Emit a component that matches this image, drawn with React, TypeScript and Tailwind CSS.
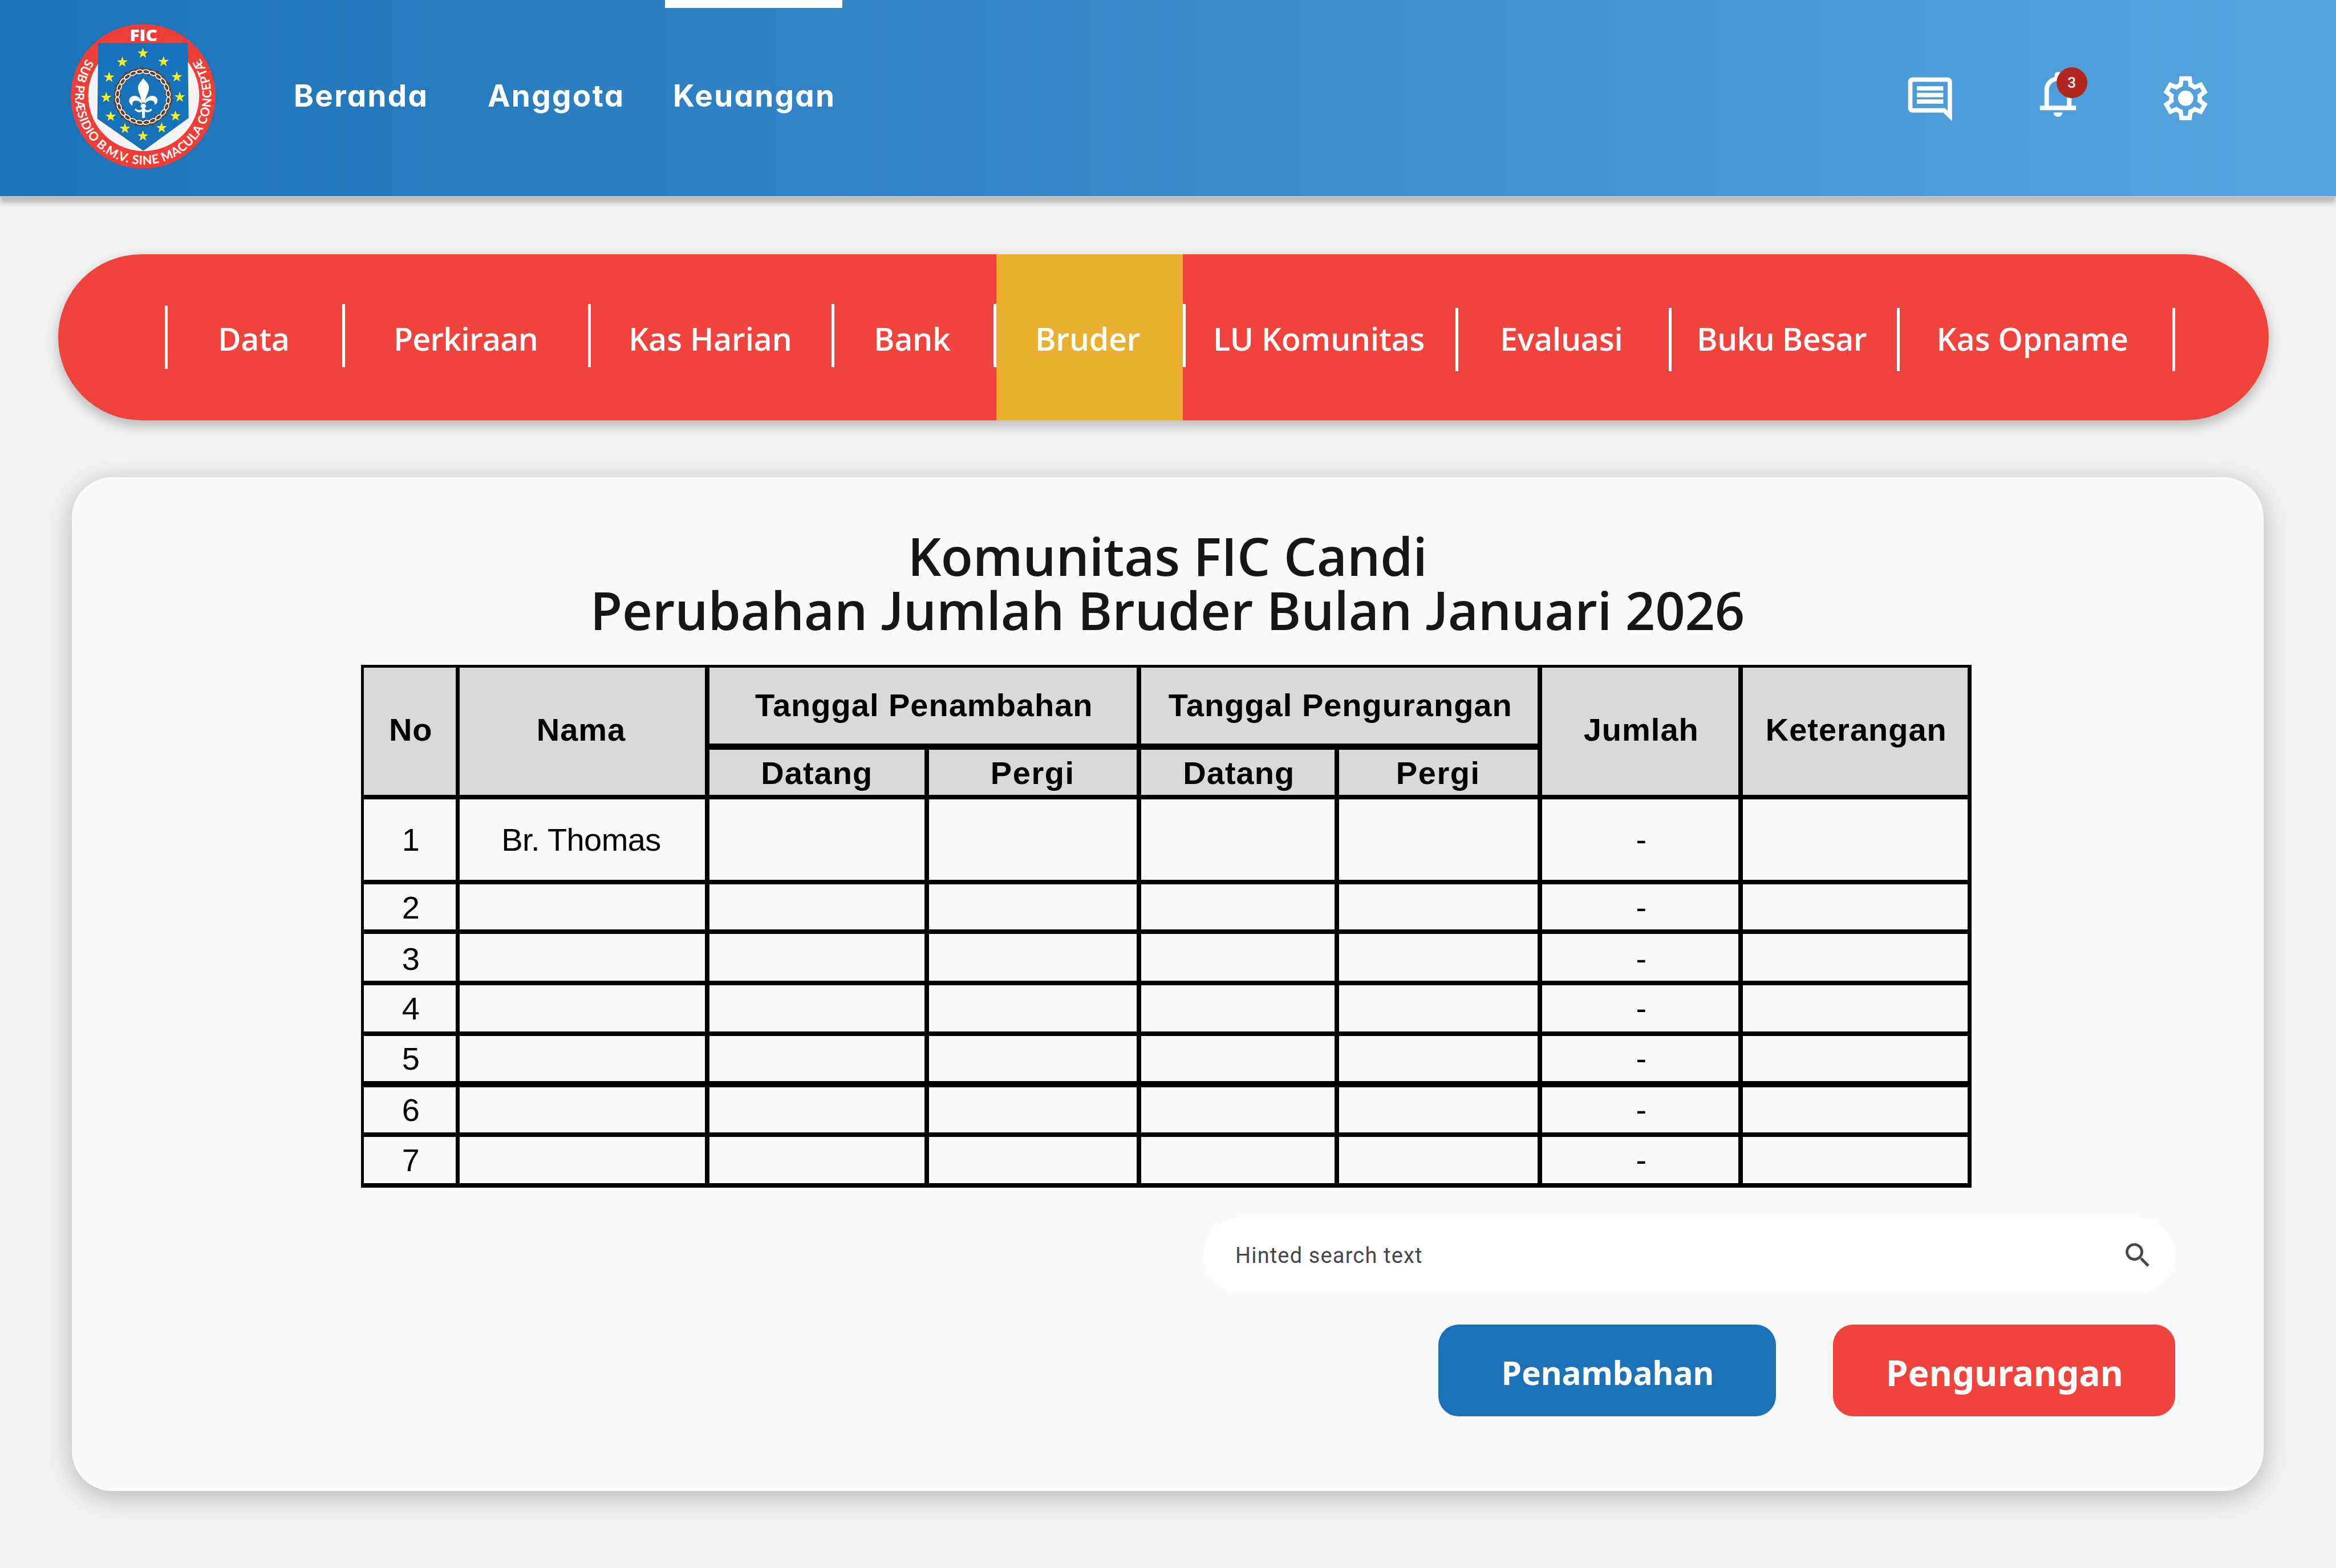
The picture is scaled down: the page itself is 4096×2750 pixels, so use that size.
import type { ReactNode } from "react";

const stars: [number, number][] = [
  [731, 354], [548, 432], [914, 428], [431, 567], [1032, 564], [405, 747],
  [1058, 743], [445, 915], [1020, 911], [571, 1022], [897, 1016], [731, 1089],
];

const starPoints = Array.from({ length: 10 }, (_, i) => {
  const r = i % 2 ? 20 : 50;
  const a = (i * Math.PI) / 5 - Math.PI / 2;
  return `${(r * Math.cos(a)).toFixed(1)},${(r * Math.sin(a)).toFixed(1)}`;
}).join(" ");

function Logo() {
  return (
    <svg viewBox="90 93 1286 1286" className="size-[254px] shrink-0">
      <circle cx="733" cy="736" r="642" fill="#ef3e37" />
      <circle cx="738" cy="729" r="493" fill="#f5f3f3" />
      <rect x="560" y="225" width="356" height="40" fill="#ef3e37" />
      <path d="M335 262H1128L1137 928L735 1220L326 935Z" fill="#1672ba" />
      {stars.map(([x, y]) => (
        <polygon key={`${x}-${y}`} points={starPoints} transform={`translate(${x} ${y})`} fill="#f9ed25" />
      ))}
      <g transform="translate(731 742)">
        <circle r="232" fill="none" stroke="#5b4230" strokeWidth="50" />
        {Array.from({ length: 11 }, (_, i) => (
          <g key={i} transform={`rotate(${i * 32.7 - 2})`}>
            <path d="M-12 -254L-4 -276L10 -254Z" fill="#5b4230" />
            <path d="M-12 -210L4 -188L12 -210Z" fill="#5b4230" transform="rotate(15)" />
          </g>
        ))}
        {Array.from({ length: 24 }, (_, i) => (
          <ellipse
            key={i}
            cy="-227"
            rx="32"
            ry="17"
            fill="none"
            stroke="#f6f0ea"
            strokeWidth="9"
            transform={`rotate(${i * 15 + 7.5})`}
          />
        ))}
      </g>
      <g fill="#fff">
        <path d="M735 575C755 605 784 622 785 658C785 705 752 735 751 790H717C718 735 687 705 687 658C688 622 715 605 735 575Z" />
        <path d="M722 782C708 745 675 725 645 732C612 738 598 772 616 798C622 808 630 814 640 818C634 796 640 780 658 775C685 768 708 785 720 804Z" />
        <path d="M748 782C762 745 795 725 825 732C858 738 870 772 854 795C848 804 842 808 833 812C838 794 830 778 812 774C785 768 760 785 748 804Z" />
        <ellipse cx="734" cy="822" rx="24" ry="20" />
        <rect x="723" y="800" width="26" height="130" rx="12" />
      </g>
      <path
        d="M668 855C690 874 715 874 735 846C757 874 780 874 801 857"
        fill="none"
        stroke="#fff"
        strokeWidth="18"
        strokeLinecap="round"
      />
      <text x="614" y="245" fontSize="143" textLength="246" lengthAdjust="spacingAndGlyphs" fill="#fff" className="font-['Open_Sans',sans-serif] font-extrabold">
        FIC
      </text>
      <path id="motto" d="M232 401A604 604 0 1 0 1232 394" fill="none" />
      <text fontSize="109" fill="#fff" className="font-['Lato',sans-serif] font-bold">
        <textPath href="#motto" textLength="2610" lengthAdjust="spacing">
          SUB PRÆSIDIO B.M.V. SINE MACULA CONCEPTÆ
        </textPath>
      </text>
    </svg>
  );
}

function Header() {
  return (
    <header className="relative flex h-[346px] items-stretch border-b-2 border-[#c8c8c8] bg-linear-to-r from-[#1a72b8] to-[#54a4e0] pr-[218px] pl-[124px] shadow-[0_9.5px_9.5px_rgba(0,0,0,0.25)]">
      <div className="flex items-start pt-[42px]">
        <Logo />
      </div>
      <nav className="flex text-[53px] leading-none font-bold tracking-[2.3px] text-white font-['Inter',sans-serif] [font-feature-settings:'cv11']">
        <a className="flex w-[340px] items-center pb-[7px] ml-[137px]">Beranda</a>
        <a className="flex w-[311px] items-center pb-[7px]">Anggota</a>
        <a className="flex w-[311px] items-center border-t-[14px] border-white pb-[21px] pl-[14px]">Keuangan</a>
      </nav>
      <div className="ml-auto flex items-center gap-[130px] text-white">
        <svg viewBox="0 0 24 24" fill="currentColor" className="mt-1 size-[92.5px]">
          <path d="M21.99 4c0-1.1-.89-2-1.99-2H4c-1.1 0-2 .9-2 2v12c0 1.1.9 2 2 2h14l4 4-.01-18zM20 4v13.17L18.83 16H4V4h16zM6 12h12v2H6v-2zm0-3h12v2H6V9zm0-3h12v2H6V6z" />
        </svg>
        <div className="relative mb-3.5">
          <svg viewBox="0 -960 960 960" fill="currentColor" className="size-[95px]">
            <path d="M160-200v-80h80v-280q0-83 50-147.5T420-792v-28q0-25 17.5-42.5T480-880q25 0 42.5 17.5T540-820v28q80 20 130 84.5T720-560v280h80v80H160ZM480-80q-33 0-56.5-23.5T400-160h160q0 33-23.5 56.5T480-80ZM320-280h320v-280q0-66-47-113t-113-47q-66 0-113 47t-47 113v280Z" />
          </svg>
          <span className="absolute top-0 left-[45px] flex size-[54.5px] items-center justify-center rounded-full bg-[#b3261e] text-[26px] leading-none font-medium font-['Roboto',sans-serif]">
            3
          </span>
        </div>
        <svg viewBox="0 -960 960 960" fill="currentColor" className="size-[92.5px]">
          <path d="m370-80-16-128q-13-5-24.5-12T307-235l-119 50L78-375l103-78q-1-7-1-13.5v-27q0-6.5 1-13.5L78-585l110-190 119 50q11-8 23-15t24-12l16-128h220l16 128q13 5 24.5 12t22.5 15l119-50 110 190-103 78q1 7 1 13.5v27q0 6.5-2 13.5l103 78-110 190-118-50q-11 8-23 15t-24 12L590-80H370Zm70-80h79l14-106q31-8 57.5-23.5T639-327l99 41 39-68-86-65q5-14 7-29.5t2-31.5q0-16-2-31.5t-7-29.5l86-65-39-68-99 42q-22-23-48.5-38.5T533-694l-13-106h-79l-14 106q-31 8-57.5 23.5T321-633l-99-41-39 68 86 64q-5 15-7 30t-2 32q0 16 2 31t7 30l-86 65 39 68 99-42q22 23 48.5 38.5T427-266l13 106Zm42-180q58 0 99-41t41-99q0-58-41-99t-99-41q-59 0-99.5 41T342-480q0 58 40.5 99t99.5 41Z" />
        </svg>
      </div>
    </header>
  );
}

const tabs: { label: string; box: string; bar: string }[] = [
  { label: "Data", box: "w-[306px] pl-[88px]", bar: "" },
  { label: "Perkiraan", box: "w-[425.5px] pl-[85px] tracking-[-0.9px]", bar: "mb-[5px]" },
  { label: "Kas Harian", box: "w-[422.5px] pl-[66.5px]", bar: "mb-[5px]" },
  { label: "Bank", box: "w-[279px] pl-[69px]", bar: "mb-[5px]" },
  { label: "Bruder", box: "w-[326.5px] pl-[68px] bg-[#e8af30]", bar: "mb-[5px]" },
  { label: "LU Komunitas", box: "w-[473.5px] pl-[48.5px]", bar: "mb-[5px]" },
  { label: "Evaluasi", box: "w-[368.5px] pl-[73px]", bar: "mt-[9px]" },
  { label: "Buku Besar", box: "w-[395px] pl-[44.5px] tracking-[-0.7px]", bar: "mt-[9px]" },
  { label: "Kas Opname", box: "w-[478.5px] pl-[65px]", bar: "mt-[9px]" },
];

function Divider({ className }: { className: string }) {
  return <span className={`h-[111px] w-[5px] shrink-0 bg-white ${className}`} />;
}

function Tabs() {
  return (
    <nav className="mt-[99.5px] ml-[102px] flex h-[291.5px] w-[3876px] items-center rounded-full bg-[#ef433b] pl-[187px] text-[55.5px] font-semibold tracking-[-0.35px] text-white shadow-[0_9.5px_23.7px_rgba(0,0,0,0.25)] font-['Open_Sans',sans-serif]">
      {tabs.map((t) => (
        <div key={t.label} className="flex h-full shrink-0 items-center">
          <Divider className={t.bar} />
          <a className={`flex h-full items-center pt-1 whitespace-nowrap ${t.box}`}>{t.label}</a>
        </div>
      ))}
      <Divider className="mt-[9px]" />
    </nav>
  );
}

const J = () => <span className="font-['Lato',sans-serif] font-semibold">J</span>;

function Head({ children, className = "" }: { children: ReactNode; className?: string }) {
  return (
    <div className={`flex items-center justify-center bg-[#d9d9d9] whitespace-nowrap ${className}`}>{children}</div>
  );
}

const columns =
  "grid-cols-[160.5px_430px_377.5px_364.5px_339.5px_348.5px_344.5px_394.5px] gap-x-[7.5px]";

const rows = [
  { no: 1, name: "Br. Thomas", cell: "pt-0.5" },
  { no: 2, name: "", cell: "pt-1" },
  { no: 3, name: "", cell: "pt-1.5" },
  { no: 4, name: "", cell: "pt-0.5" },
  { no: 5, name: "", cell: "pt-0.5" },
  { no: 6, name: "", cell: "mt-[3px] pt-0.5" },
  { no: 7, name: "", cell: "pt-0.5" },
];

const align = ["pl-1", "pr-1 tracking-[-0.6px]", "", "", "", "", "pl-1", ""];

function Table() {
  return (
    <div className="mt-[50px] ml-[507.5px] w-[2824px] bg-black pt-[5px] pr-[7px] pb-2 pl-[5px] text-[56px] leading-none text-black font-['Liberation_Sans',Arial,sans-serif]">
      <div className={`grid grid-rows-[133px_79px] gap-y-[11px] font-bold tracking-[1px] ${columns}`}>
        <Head className="row-span-2 pb-1 pl-1">No</Head>
        <Head className="row-span-2 pr-1 pb-1">Nama</Head>
        <Head className="col-span-2 pl-1">Tanggal Penambahan</Head>
        <Head className="col-span-2 pl-1">Tanggal Pengurangan</Head>
        <Head className="row-span-2 pb-1 pl-1">Jumlah</Head>
        <Head className="row-span-2 pb-1 pl-1">Keterangan</Head>
        <Head className="pt-1">Datang</Head>
        <Head className="pt-1 tracking-[1.6px]">Pergi</Head>
        <Head className="pt-1 pl-1">Datang</Head>
        <Head className="pt-1 tracking-[1.6px]">Pergi</Head>
      </div>
      <div className={`mt-2 grid grid-rows-[141px_79px_82px_81px_79px_82px_81px] gap-y-2 ${columns}`}>
        {rows.map((r) =>
          [String(r.no), r.name, "", "", "", "", "-", ""].map((v, i) => (
            <div key={`${r.no}-${i}`} className={`flex items-center justify-center bg-[#fafafa] ${r.cell} ${align[i]}`}>
              {v}
            </div>
          )),
        )}
      </div>
    </div>
  );
}

export default function App() {
  return (
    <div className="h-[2750px] w-[4096px] overflow-hidden bg-[#f2f2f2]">
      <Header />
      <Tabs />
      <main className="mt-[99.5px] ml-[125.5px] h-[1778px] w-[3843px] rounded-[71px] bg-[#fafafa] pt-[91.5px] shadow-[0_9.5px_50px_rgba(0,0,0,0.25)]">
        <h1 className="h-[189.6px] text-center text-[92px] leading-[94.8px] font-semibold tracking-[-0.25px] text-[#171717] font-['Open_Sans',sans-serif]">
          Komunitas FIC Candi
          <br />
          Perubahan <J />umlah Bruder Bulan <J />anuari 2026
        </h1>
        <div className="-mt-0.5 flow-root">
          <Table />
        </div>
        <div className="mt-[52.5px] mr-[154.5px] flex flex-col items-end">
          <div className="flex h-[133px] w-[1704px] items-center justify-between rounded-full bg-white pr-[37px] pl-[56px] text-[#49454f]">
            <span className="pt-0.5 text-[37.9px] leading-none tracking-[1.2px] font-['Roboto',sans-serif]">Hinted search text</span>
            <svg viewBox="0 0 24 24" fill="currentColor" className="size-[57px]">
              <path d="M15.5 14h-.79l-.28-.27A6.471 6.471 0 0 0 16 9.5 6.5 6.5 0 1 0 9.5 16c1.61 0 3.09-.59 4.23-1.57l.27.28v.79l5 4.99L20.49 19l-4.99-5zm-6 0C7.01 14 5 11.99 5 9.5S7.01 5 9.5 5 14 7.01 14 9.5 11.99 14 9.5 14z" />
            </svg>
          </div>
          <div className="mt-[54.5px] flex gap-[100px] font-bold text-white font-['Noto_Sans',sans-serif]">
            <button className="h-[161px] w-[592px] rounded-[35.5px] bg-[#1b72b8] pt-[8px] pl-[2px] text-[56.7px] leading-none">Penambahan</button>
            <button className="h-[161px] w-[600px] rounded-[35.5px] bg-[#ef433b] pt-[7px] pl-[2px] text-[62px] leading-none">Pengurangan</button>
          </div>
        </div>
      </main>
    </div>
  );
}
